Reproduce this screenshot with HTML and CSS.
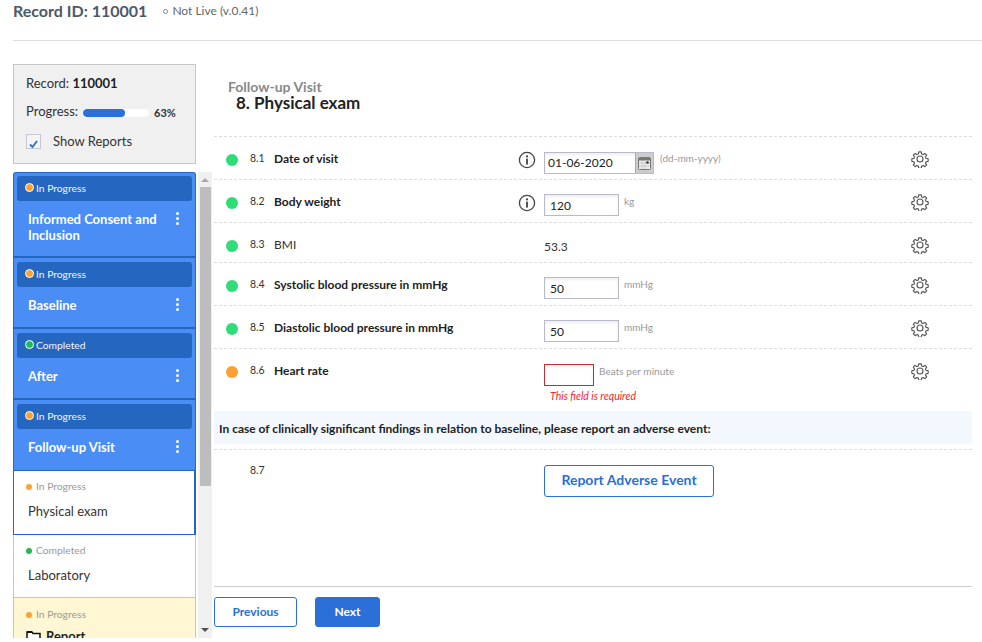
FILE: index.html
```html
<!DOCTYPE html>
<html lang="en">
<head>
  <meta charset="UTF-8">
  <title>Record 110001</title>
  <link rel="stylesheet" href="styles.css">
</head>

<body>
  <svg class="defs" width="0" height="0">
    <symbol id="gear" viewBox="0 0 24 24">
      <path fill="none" stroke="#555" stroke-width="1.500" stroke-linejoin="round" d="M10.300 2.500h3.400l.5 2.800 1.900.8 2.400-1.600 2.400 2.400-1.600 2.400.8 1.900 2.800.5v3.400l-2.800.5-.8 1.900 1.600 2.400-2.400 2.400-2.400-1.600-1.900.8-.5 2.800h-3.400l-.5-2.800-1.900-.8-2.400 1.600-2.400-2.400 1.600-2.400-.8-1.900-2.800-.5v-3.400l2.800-.5.8-1.900-1.600-2.400 2.400-2.400 2.400 1.600 1.900-.8z"/>
      <circle cx="12" cy="12" r="4" fill="none" stroke="#555" stroke-width="1.500"/>
    </symbol>
    <symbol id="info" viewBox="0 0 18 18">
      <circle cx="9" cy="9" r="7.600" fill="none" stroke="#444" stroke-width="1.300"/>
      <circle cx="9" cy="5.400" r="1.100" fill="#444"/>
      <rect x="8.100" y="7.600" width="1.800" height="6" fill="#444"/>
    </symbol>
  </svg>

  <header class="top">
    <h1>Record ID: 110001</h1>
    <span class="live"><i class="ring"></i>Not Live (v.0.41)</span>
  </header>

  <div class="layout">
    <aside class="side">
      <div class="record-box">
        <div class="rec-line">Record: <b>110001</b></div>
        <div class="progress-line">
          <span>Progress:</span>
          <span class="bar"><span class="bar-fill"></span></span>
          <b>63%</b>
        </div>
        <div class="reports-line">
          <span class="check">
            <svg width="9" height="8" viewBox="0 0 9 8"><path d="M1 4.500l2.500 2.500 4.500-6" fill="none" stroke="#2a6fd6" stroke-width="1.800"/></svg>
          </span>
          Show Reports
        </div>
      </div>

      <div class="nav-wrap">
        <nav class="nav">
          <div class="section tall">
            <div class="status"><i class="dot orange"></i>In Progress</div>
            <div class="sec-title"><span>Informed Consent and Inclusion</span><span class="kebab"><i></i><i></i><i></i></span></div>
          </div>
          <div class="section">
            <div class="status"><i class="dot orange"></i>In Progress</div>
            <div class="sec-title"><span>Baseline</span><span class="kebab"><i></i><i></i><i></i></span></div>
          </div>
          <div class="section">
            <div class="status"><i class="dot green"></i>Completed</div>
            <div class="sec-title"><span>After</span><span class="kebab"><i></i><i></i><i></i></span></div>
          </div>
          <div class="section last">
            <div class="status"><i class="dot orange"></i>In Progress</div>
            <div class="sec-title"><span>Follow-up Visit</span><span class="kebab"><i></i><i></i><i></i></span></div>
          </div>
          <div class="child active">
            <div class="child-status"><i class="mini orange"></i>In Progress</div>
            <div class="child-title">Physical exam</div>
          </div>
          <div class="child">
            <div class="child-status"><i class="mini green"></i>Completed</div>
            <div class="child-title">Laboratory</div>
          </div>
          <div class="child report">
            <div class="child-status"><i class="mini orange"></i>In Progress</div>
            <div class="child-title folder">
              <svg width="15" height="13" viewBox="0 0 15 13"><path d="M1 12V2h5l1 1.500h7V12z" fill="#fff" stroke="#111" stroke-width="1.500"/><path d="M1 1h5v2H1z" fill="#111"/></svg>
              <b>Report</b>
            </div>
          </div>
        </nav>
        <div class="scrollbar">
          <span class="arrow up"></span>
          <span class="thumb"></span>
          <span class="arrow down"></span>
        </div>
      </div>
    </aside>

    <main class="main">
      <div class="heading">
        <div class="crumb">Follow-up Visit</div>
        <h2>8. Physical exam</h2>
      </div>

      <div class="row">
        <i class="status-dot ok"></i><span class="num">8.1</span><span class="label">Date of visit</span>
        <svg class="info" width="18" height="18"><use href="#info"/></svg>
        <div class="field">
          <span class="date-input"><span class="date-text">01-06-2020</span><span class="cal">
            <svg width="13" height="13" viewBox="0 0 13 13"><rect x=".5" y=".5" width="12" height="12" rx="1" fill="#eee" stroke="#777"/><rect x="1" y="1" width="11" height="2.500" fill="#777"/><path d="M1 6h11M1 9h11M4 3v9M7 3v9" stroke="#bbb" stroke-width=".7"/><circle cx="9.500" cy="5.500" r="1.300" fill="#333"/></svg>
          </span></span>
          <span class="hint date-hint">(dd-mm-yyyy)</span>
        </div>
        <svg class="gear" width="18" height="18"><use href="#gear"/></svg>
      </div>

      <div class="row">
        <i class="status-dot ok"></i><span class="num">8.2</span><span class="label">Body weight</span>
        <svg class="info" width="18" height="18"><use href="#info"/></svg>
        <div class="field"><span class="input">120</span><span class="hint">kg</span></div>
        <svg class="gear" width="18" height="18"><use href="#gear"/></svg>
      </div>

      <div class="row short">
        <i class="status-dot ok"></i><span class="num">8.3</span><span class="label plain">BMI</span>
        <div class="field"><span class="value">53.3</span></div>
        <svg class="gear" width="18" height="18"><use href="#gear"/></svg>
      </div>

      <div class="row">
        <i class="status-dot ok"></i><span class="num">8.4</span><span class="label">Systolic blood pressure in mmHg</span>
        <div class="field"><span class="input">50</span><span class="hint">mmHg</span></div>
        <svg class="gear" width="18" height="18"><use href="#gear"/></svg>
      </div>

      <div class="row">
        <i class="status-dot ok"></i><span class="num">8.5</span><span class="label">Diastolic blood pressure in mmHg</span>
        <div class="field"><span class="input">50</span><span class="hint">mmHg</span></div>
        <svg class="gear" width="18" height="18"><use href="#gear"/></svg>
      </div>

      <div class="row error-row">
        <i class="status-dot warn"></i><span class="num">8.6</span><span class="label">Heart rate</span>
        <div class="field">
          <span class="input invalid"></span><span class="hint wide">Beats per minute</span>
          <div class="error">This field is required</div>
        </div>
        <svg class="gear" width="18" height="18"><use href="#gear"/></svg>
      </div>

      <div class="notice">In case of clinically significant findings in relation to baseline, please report an adverse event:</div>

      <div class="row ae-row">
        <span class="num">8.7</span>
        <div class="field"><button class="btn-ae">Report Adverse Event</button></div>
      </div>

      <div class="footer">
        <button class="btn-prev">Previous</button>
        <button class="btn-next">Next</button>
      </div>
    </main>
  </div>
</body>
</html>
```

FILE: styles.css
```css
body {
  font-family: 'Lato', sans-serif;
  margin: 0;
  color: #333;
  background: #fff;
  overflow: hidden;
  height: 642px;
  font-size: 13px;
}
.defs {
  position: absolute;
}
.top {
  margin-left: 13px;
  height: 40px;
  border-bottom: 1px solid #ddd;
  display: flex;
  align-items: flex-start;
}
.top h1 {
  margin: 0;
  padding-top: 1px;
  font-size: 16px;
  line-height: 20px;
  font-weight: 700;
  color: #4d5968;
}
.live {
  margin-left: 16px;
  margin-top: 2px;
  font-size: 12px;
  line-height: 18px;
  color: #666;
  display: flex;
  align-items: center;
}
.ring {
  width: 3px;
  height: 3px;
  border: 1px solid #888;
  border-radius: 50%;
  margin-right: 4px;
}
.layout {
  display: flex;
  padding-left: 13px;
  padding-top: 23px;
}
.side {
  width: 199px;
  flex: none;
}
.record-box {
  width: 183px;
  height: 100px;
  box-sizing: border-box;
  background: #f0f0f0;
  border: 1px solid #c6c6c6;
  padding: 10px 12px;
  font-size: 13px;
  color: #333;
}
.rec-line {
  line-height: 17px;
}
.rec-line b {
  color: #222;
}
.progress-line {
  display: flex;
  align-items: center;
  margin-top: 10px;
  line-height: 17px;
}
.bar {
  width: 66px;
  height: 8px;
  background: #fff;
  border-radius: 4px;
  margin: 2px 5px 0 5px;
  overflow: hidden;
}
.bar-fill {
  display: block;
  width: 64%;
  height: 100%;
  background: #2b6fd8;
  border-radius: 4px;
}
.progress-line b {
  font-size: 11px;
  margin-top: 2px;
}
.reports-line {
  display: flex;
  align-items: center;
  margin-top: 12px;
  line-height: 17px;
}
.check {
  width: 13px;
  height: 13px;
  border: 1px solid #c8c8d4;
  background: #f4f4f4;
  margin-right: 12px;
  display: flex;
  align-items: flex-end;
  justify-content: center;
}
.nav-wrap {
  display: flex;
  margin-top: 8px;
  height: 466px;
  overflow: hidden;
}
.nav {
  width: 183px;
  flex: none;
  height: 466px;
  overflow: hidden;
}
.section {
  background: #4a8df5;
  border: 1px solid #2566c0;
  border-width: 0 1px 2px;
  height: 65px;
  padding: 4px 3px 0;
}
.section.tall {
  border-top-width: 1px;
  border-radius: 3px 3px 0 0;
  padding-top: 3px;
  height: 80px;
}
.section.last {
  border-bottom: 0;
  height: 66px;
}
.status {
  height: 25px;
  padding-bottom: 2px;
  box-sizing: border-box;
  background: #2566c0;
  border-radius: 3px;
  color: #f0f5ff;
  font-size: 10.300px;
  display: flex;
  align-items: center;
  padding-left: 8px;
}
.dot {
  width: 7px;
  height: 7px;
  border-radius: 50%;
  border: 1px solid #fff;
  margin-right: 2px;
}
.dot.orange {
  background: #ffa033;
}
.dot.green {
  background: #22b757;
}
.sec-title {
  display: flex;
  justify-content: space-between;
  align-items: flex-start;
  padding: 10px 13px 0 11px;
  color: #fff;
  font-size: 13px;
  font-weight: 700;
  line-height: 16px;
}
.sec-title > span:first-child {
  width: 135px;
}
.kebab {
  display: flex;
  flex-direction: column;
  gap: 2px;
  padding-top: 1px;
}
.kebab i {
  width: 3px;
  height: 3px;
  background: #fff;
  border-radius: 50%;
}
.child {
  height: 63px;
  background: #fff;
  border: 1px solid #c6c6c6;
  border-width: 0 1px 1px;
  padding: 9px 0 0 12px;
  box-sizing: border-box;
}
.child.active {
  height: 65px;
  border: 1px solid #2566c0;
  border-right-width: 2px;
}
.child.report {
  background: #fff7d4;
  border-bottom: 0;
  padding-top: 10px;
}
.child-status {
  font-size: 10.300px;
  line-height: 13px;
  color: #9a9a9a;
  display: flex;
  align-items: center;
}
.mini {
  width: 6px;
  height: 6px;
  border-radius: 50%;
  margin-right: 4px;
}
.mini.orange {
  background: #ffa033;
}
.mini.green {
  background: #22b757;
}
.child-title {
  font-size: 13px;
  line-height: 18px;
  margin-top: 9px;
  color: #333;
  margin-left: 2px;
}
.folder {
  display: flex;
  align-items: center;
  gap: 5px;
  margin-left: 0;
  margin-top: 6px;
}
.folder b {
  color: #222;
}
.scrollbar {
  width: 14px;
  margin-left: 2px;
  background: #f0f0f0;
  height: 466px;
  display: flex;
  flex-direction: column;
  align-items: center;
  flex: none;
}
.arrow {
  width: 0;
  height: 0;
  border-left: 4px solid transparent;
  border-right: 4px solid transparent;
  flex: none;
}
.arrow.up {
  border-bottom: 4px solid #a8a8a8;
  margin: 6px 0 5px;
}
.arrow.down {
  border-top: 4px solid #505050;
  margin-top: auto;
  margin-bottom: 6px;
}
.thumb {
  width: 11px;
  height: 299px;
  background: #bdbdbd;
}
.main {
  width: 758px;
  margin-left: 2px;
  flex: none;
  height: 574px;
  display: flex;
  flex-direction: column;
}
.heading {
  border-bottom: 1px dashed #ddd;
  box-sizing: border-box;
  height: 73px;
  padding: 16px 0 0 14px;
}
.crumb {
  font-size: 14px;
  line-height: 14px;
  font-weight: 700;
  color: #888;
}
.heading h2 {
  margin: 0 0 0 8px;
  font-size: 17px;
  line-height: 18px;
  font-weight: 700;
  color: #222;
}
.row {
  display: flex;
  align-items: flex-start;
  height: 43px;
  box-sizing: border-box;
  border-bottom: 1px dashed #ddd;
  position: relative;
}
.row.short {
  height: 40px;
}
.status-dot {
  width: 12px;
  height: 12px;
  border-radius: 50%;
  margin: 17px 12px 0 12px;
  flex: none;
}
.status-dot.ok {
  background: #2fdd78;
}
.status-dot.warn {
  background: #ffa033;
}
.num {
  width: 24px;
  flex: none;
  font-size: 10.500px;
  line-height: 13px;
  padding-top: 15px;
  color: #333;
}
.label {
  width: 270px;
  flex: none;
  font-size: 12px;
  line-height: 16px;
  padding-top: 14px;
  font-weight: 700;
  color: #222;
}
.label.plain {
  font-weight: 400;
  color: #333;
}
.info {
  position: absolute;
  left: 304px;
  top: 14px;
}
.field {
  flex: none;
  width: 367px;
  padding-top: 14px;
  font-size: 12px;
  box-sizing: border-box;
}
.input {
  display: inline-block;
  width: 75px;
  height: 22px;
  line-height: 21px;
  border: 1px solid #b9b9cc;
  padding-left: 5px;
  box-sizing: border-box;
  vertical-align: top;
  font-size: 12px;
  color: #222;
  box-shadow: inset 0 2px 3px #eee;
}
.input.invalid {
  width: 50px;
  margin-top: 1px;
  padding: 0;
  border-color: #b83232;
}
.date-input {
  display: inline-flex;
  width: 110px;
  height: 22px;
  margin-top: 1px;
  box-sizing: border-box;
  border: 1px solid #b9b9cc;
  vertical-align: top;
  box-shadow: inset 0 2px 3px #eee;
}
.date-text {
  flex: 1;
  line-height: 20px;
  padding-left: 3px;
  font-size: 12px;
  color: #222;
}
.cal {
  width: 17px;
  background: #ccc;
  display: flex;
  align-items: center;
  justify-content: center;
  border-left: 1px solid #aaa;
}
.hint {
  display: inline-block;
  margin-left: 5px;
  font-size: 10px;
  line-height: 14px;
  color: #999;
  vertical-align: top;
}
.hint.wide {
  font-size: 10.100px;
  margin-top: 1px;
}
.date-hint {
  margin-left: 3px;
}
.value {
  font-size: 12px;
  line-height: 16px;
  color: #333;
  display: block;
  padding-top: 2px;
}
.gear {
  margin-top: 13px;
  flex: none;
}
.error-row {
  height: auto;
  border-bottom: 0;
  min-height: 62px;
}
.error {
  margin: 4px 0 0 6px;
  font-size: 10.500px;
  line-height: 12px;
  font-style: italic;
  color: #fb2033;
}
.notice {
  height: 33px;
  line-height: 36px;
  background: #f3f8fe;
  padding-left: 5px;
  font-size: 12px;
  font-weight: 700;
  color: #222;
}
.ae-row {
  height: auto;
  margin-top: 5px;
  padding-left: 36px;
  border-bottom: 0;
  border-top: 1px dashed #ddd;
  flex: 1;
}
.ae-row .num {
  width: 294px;
  padding-top: 14px;
}
.ae-row .field {
  padding-top: 15px;
}
.btn-ae {
  width: 170px;
  height: 32px;
  border: 1px solid #2b6fd8;
  border-radius: 3px;
  background: #fff;
  color: #2b6fd8;
  font-family: inherit;
  font-size: 14px;
  font-weight: 700;
  padding: 0 0 3px;
}
.footer {
  border-top: 1px solid #ccc;
  padding-top: 10px;
  height: 52px;
  box-sizing: border-box;
  display: flex;
  gap: 18px;
}
.footer button {
  height: 30px;
  border-radius: 3px;
  font-family: inherit;
  font-size: 12px;
  font-weight: 700;
  padding: 0 0 2px;
  border: 1px solid #2b6fd8;
}
.btn-prev {
  width: 83px;
  background: #fff;
  color: #2b6fd8;
}
.btn-next {
  width: 65px;
  background: #2b6fd8;
  color: #fff;
}
```
